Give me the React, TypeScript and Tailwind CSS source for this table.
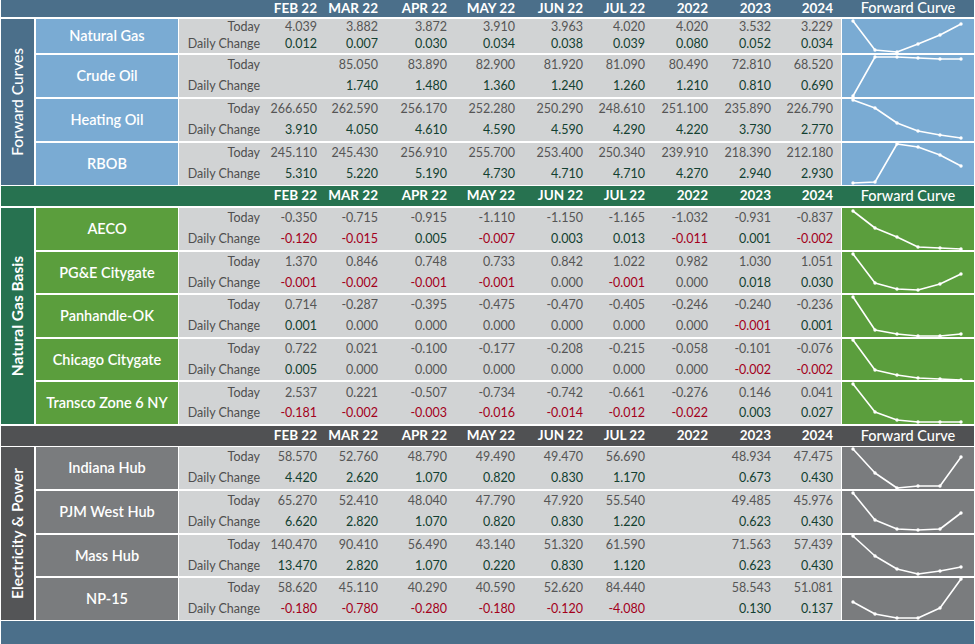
import React from 'react';

type Row = {
  name: string;
  today: string[];
  change: string[];
  curve: number[];
  h: number;
};

type Section = {
  title: string;
  dark: string;
  light: string;
  titleWeight: string;
  bodyH: string;
  rows: Row[];
};

const COLS = ['FEB 22', 'MAR 22', 'APR 22', 'MAY 22', 'JUN 22', 'JUL 22', '2022', '2023', '2024'];
const COL_W = ['w-[57px]', 'w-[61px]', 'w-[69px]', 'w-[68px]', 'w-[68px]', 'w-[62px]', 'w-[63px]', 'w-[63px]', 'w-[62px]'];
const CURVE_X = [11, 33, 55, 76, 98, 119];

const sections: Section[] = [
  {
    title: 'Forward Curves',
    dark: 'bg-[#4b6f8a]',
    light: 'bg-[#7aabd3]',
    titleWeight: 'font-medium',
    bodyH: 'h-[166px]',
    rows: [
      {
        name: 'Natural Gas',
        h: 34,
        today: ['4.039', '3.882', '3.872', '3.910', '3.963', '4.020', '4.020', '3.532', '3.229'],
        change: ['0.012', '0.007', '0.030', '0.034', '0.038', '0.039', '0.080', '0.052', '0.034'],
        curve: [2, 31, 33, 25, 16, 5],
      },
      {
        name: 'Crude Oil',
        h: 42,
        today: ['', '85.050', '83.890', '82.900', '81.920', '81.090', '80.490', '72.810', '68.520'],
        change: ['', '1.740', '1.480', '1.360', '1.240', '1.260', '1.210', '0.810', '0.690'],
        curve: [41, 2, 2, 3, 4, 4],
      },
      {
        name: 'Heating Oil',
        h: 42,
        today: ['266.650', '262.590', '256.170', '252.280', '250.290', '248.610', '251.100', '235.890', '226.790'],
        change: ['3.910', '4.050', '4.610', '4.590', '4.590', '4.290', '4.220', '3.730', '2.770'],
        curve: [1, 9, 24, 32, 36, 39],
      },
      {
        name: 'RBOB',
        h: 42,
        today: ['245.110', '245.430', '256.910', '255.700', '253.400', '250.340', '239.910', '218.390', '212.180'],
        change: ['5.310', '5.220', '5.190', '4.730', '4.710', '4.710', '4.270', '2.940', '2.930'],
        curve: [40, 39, 1, 4, 12, 23],
      },
    ],
  },
  {
    title: 'Natural Gas Basis',
    dark: 'bg-[#277250]',
    light: 'bg-[#5b9e3d]',
    titleWeight: 'font-bold',
    bodyH: 'h-[216px]',
    rows: [
      {
        name: 'AECO',
        h: 41.6,
        today: ['-0.350', '-0.715', '-0.915', '-1.110', '-1.150', '-1.165', '-1.032', '-0.931', '-0.837'],
        change: ['-0.120', '-0.015', '0.005', '-0.007', '0.003', '0.013', '-0.011', '0.001', '-0.002'],
        curve: [3, 20, 29, 39, 40, 41],
      },
      {
        name: 'PG&E Citygate',
        h: 41.6,
        today: ['1.370', '0.846', '0.748', '0.733', '0.842', '1.022', '0.982', '1.030', '1.051'],
        change: ['-0.001', '-0.002', '-0.001', '-0.001', '0.000', '-0.001', '0.000', '0.018', '0.030'],
        curve: [2, 31, 37, 38, 32, 22],
      },
      {
        name: 'Panhandle-OK',
        h: 41.6,
        today: ['0.714', '-0.287', '-0.395', '-0.475', '-0.470', '-0.405', '-0.246', '-0.240', '-0.236'],
        change: ['0.001', '0.000', '0.000', '0.000', '0.000', '0.000', '0.000', '-0.001', '0.001'],
        curve: [2, 35, 39, 41, 41, 39],
      },
      {
        name: 'Chicago Citygate',
        h: 41.6,
        today: ['0.722', '0.021', '-0.100', '-0.177', '-0.208', '-0.215', '-0.058', '-0.101', '-0.076'],
        change: ['0.005', '0.000', '0.000', '0.000', '0.000', '0.000', '0.000', '-0.002', '-0.002'],
        curve: [1, 31, 36, 39, 40, 41],
      },
      {
        name: 'Transco Zone 6 NY',
        h: 41.6,
        today: ['2.537', '0.221', '-0.507', '-0.734', '-0.742', '-0.661', '-0.276', '0.146', '0.041'],
        change: ['-0.181', '-0.002', '-0.003', '-0.016', '-0.014', '-0.012', '-0.022', '0.003', '0.027'],
        curve: [2, 30, 38, 40, 40, 40],
      },
    ],
  },
  {
    title: 'Electricity & Power',
    dark: 'bg-[#545557]',
    light: 'bg-[#7a7c7e]',
    titleWeight: 'font-semibold',
    bodyH: 'h-[173px]',
    rows: [
      {
        name: 'Indiana Hub',
        h: 41.75,
        today: ['58.570', '52.760', '48.790', '49.490', '49.470', '56.690', '', '48.934', '47.475'],
        change: ['4.420', '2.620', '1.070', '0.820', '0.830', '1.170', '', '0.673', '0.430'],
        curve: [2, 26, 41, 39, 39, 10],
      },
      {
        name: 'PJM West Hub',
        h: 41.75,
        today: ['65.270', '52.410', '48.040', '47.790', '47.920', '55.540', '', '49.485', '45.976'],
        change: ['6.620', '2.820', '1.070', '0.820', '0.830', '1.220', '', '0.623', '0.430'],
        curve: [2, 29, 38, 39, 38, 22],
      },
      {
        name: 'Mass Hub',
        h: 41.75,
        today: ['140.470', '90.410', '56.490', '43.140', '51.320', '61.590', '', '71.563', '57.439'],
        change: ['13.470', '2.820', '1.070', '0.220', '0.830', '1.120', '', '0.623', '0.430'],
        curve: [1, 21, 34, 39, 36, 32],
      },
      {
        name: 'NP-15',
        h: 41.75,
        today: ['58.620', '45.110', '40.290', '40.590', '52.620', '84.440', '', '58.543', '51.081'],
        change: ['-0.180', '-0.780', '-0.280', '-0.180', '-0.120', '-4.080', '', '0.130', '0.137'],
        curve: [24, 36, 40, 40, 30, 1],
      },
    ],
  },
];

const headerBg = ['bg-[#4b6f8a]', 'bg-[#277250]', 'bg-[#505153]'];
const headerH = ['h-[17px]', 'h-[20px]', 'h-[20px]'];

function changeColor(v: string) {
  if (v.startsWith('-')) return 'text-[#a3001b]';
  if (parseFloat(v) === 0) return 'text-[#555555]';
  return 'text-[#123f30]';
}

const Sparkline: React.FC<{ ys: number[]; h: number }> = ({ ys, h }) => {
  const pts = ys.map((y, i) => `${CURVE_X[i]},${y}`).join(' ');
  return (
    <svg width={132} height={h} viewBox={`0 0 132 ${h}`} className="block">
      <polyline points={pts} fill="none" stroke="white" strokeWidth={1.6} strokeLinejoin="round" />
      {ys.map((y, i) => (
        <circle key={i} cx={CURVE_X[i]} cy={y} r={1.7} fill="white" />
      ))}
    </svg>
  );
};

const HeaderBar: React.FC<{ idx: number }> = ({ idx }) => (
  <div className={`flex items-center text-white ${headerBg[idx]} ${headerH[idx]}`}>
    <div className="w-[259px] shrink-0" />
    {COLS.map((c, i) => (
      <div key={c} className={`${COL_W[i]} shrink-0 text-right text-[13.5px] font-bold leading-none`}>
        {c}
      </div>
    ))}
    <div className="w-[9px] shrink-0" />
    <div className="w-[132px] shrink-0 text-center text-[14.5px] font-medium leading-none">Forward Curve</div>
  </div>
);

const DataRow: React.FC<{ row: Row; light: string }> = ({ row, light }) => (
  <div className="flex gap-px" style={{ height: row.h }}>
    <div className={`w-[142px] shrink-0 flex items-center justify-center text-white text-[14.5px] font-semibold ${light}`}>
      {row.name}
    </div>
    <div className="w-[662px] shrink-0 flex flex-col bg-[#d1d3d4] text-[12.5px]">
      {[
        { label: 'Today', vals: row.today, isChange: false },
        { label: 'Daily Change', vals: row.change, isChange: true },
      ].map((line) => (
        <div key={line.label} className="flex-1 flex items-center leading-none">
          <div className="w-[81px] shrink-0 text-right text-[#4f4f4f]">{line.label}</div>
          {line.vals.map((v, i) => (
            <div
              key={i}
              className={`${COL_W[i]} shrink-0 text-right ${line.isChange ? changeColor(v) : 'text-[#555555]'}`}
            >
              {v}
            </div>
          ))}
        </div>
      ))}
    </div>
    <div className={`w-[132px] shrink-0 ${light}`}>
      <Sparkline ys={row.curve} h={row.h} />
    </div>
  </div>
);

const SectionBody: React.FC<{ s: Section }> = ({ s }) => (
  <div className={`flex gap-[2px] ${s.bodyH}`}>
    <div className={`w-[33px] shrink-0 flex items-center justify-center ${s.dark}`}>
      <span className={`[writing-mode:vertical-rl] rotate-180 text-white text-[15.5px] whitespace-nowrap ${s.titleWeight}`}>
        {s.title}
      </span>
    </div>
    <div className="flex-1 flex flex-col gap-[2px]">
      {s.rows.map((r) => (
        <DataRow key={r.name} row={r} light={s.light} />
      ))}
    </div>
  </div>
);

export default function App() {
  return (
    <div className="w-[975px] h-[644px] overflow-hidden bg-white px-px" style={{ fontFamily: 'Lato, "Noto Sans", sans-serif' }}>
      <div className="flex flex-col">
        <HeaderBar idx={0} />
        <div className="h-[2px]" />
        <SectionBody s={sections[0]} />
        <div className="h-px" />
        <HeaderBar idx={1} />
        <div className="h-[2px]" />
        <SectionBody s={sections[1]} />
        <div className="h-[2px]" />
        <HeaderBar idx={2} />
        <div className="h-px" />
        <SectionBody s={sections[2]} />
        <div className="h-px" />
        <div className="h-[23px] bg-[#4b6f8a]" />
      </div>
    </div>
  );
}
